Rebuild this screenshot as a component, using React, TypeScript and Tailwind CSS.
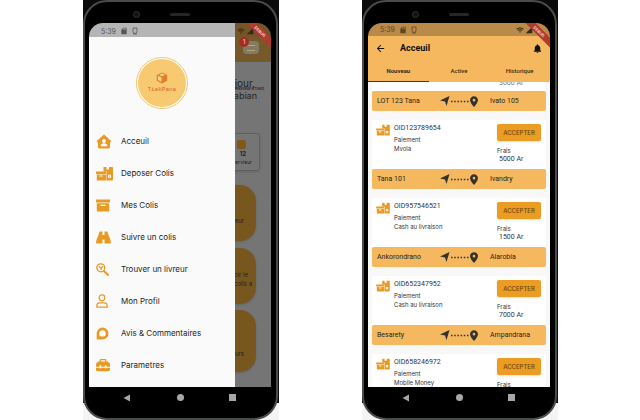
import type { ReactNode } from "react";
import { MdWifi, MdSignalCellular4Bar, MdBatteryFull, MdSdCard, MdNotifications, MdArrowBack } from "react-icons/md";
import { FaToolbox, FaLocationDot } from "react-icons/fa6";

function ParcelsIcon({ className }: { className: string }) {
  return (
    <svg viewBox="0 0 17 15" className={className} fill="#e89a25" aria-hidden="true">
      <path d="M7.500 1h3v2.500h2.500V1H16a1 1 0 0 1 1 1v11.500a1 1 0 0 1-1 1h-5.500V5.500h-3z" />
      <path d="M0 5.500h10v2.500H0zM.8 8.600h9.400v5.900H.8z" />
      <path d="M3.500 9.500h3v1h-3z" fill="#fff" />
      <path d="M12 8.700h3v3h-3z" fill="#fff" />
      <path d="M13 9.700h1v1h-1z" />
    </svg>
  );
}

function HouseIcon() {
  return (
    <svg viewBox="0 0 16 15" className="h-[15px] w-4" fill="#e89a25" aria-hidden="true">
      <path d="M8 .5 15.500 7.300 14.600 8.300H14V13a1.500 1.500 0 0 1-1.500 1.500h-9A1.500 1.500 0 0 1 2 13V8.300h-.6L.5 7.300z" />
      <circle cx="8" cy="7" r="1.900" fill="#fff" />
      <path d="M4.500 12.300c0-4 7-4 7 0z" fill="#fff" />
    </svg>
  );
}

function BoxIcon() {
  return (
    <svg viewBox="0 0 14 13" className="h-[13px] w-3.5" fill="#e89a25" aria-hidden="true">
      <path d="M0 .5h14v3H0zM.8 4.200h12.400V12a.6.6 0 0 1-.6.6H1.400a.6.6 0 0 1-.6-.6z" />
      <path d="M4.500 5.800h5v1.200h-5z" fill="#fff" />
    </svg>
  );
}

function BinocularsIcon() {
  return (
    <svg viewBox="0 0 15 13" className="h-[13px] w-[15px]" fill="#e89a25" aria-hidden="true">
      <path d="M3.500.5h3v11.500a.6.6 0 0 1-.6.6H.8a.7.7 0 0 1-.7-.7C.1 8 2.300 6 3.500.5z" />
      <path d="M11.500.5h-3v11.500a.6.6 0 0 0 .6.6h5.100a.7.7 0 0 0 .7-.7C14.900 8 12.700 6 11.500.5z" />
      <path d="M6 4h3v4.500H6z" />
    </svg>
  );
}

function SearchPersonIcon() {
  return (
    <svg viewBox="0 0 13 13" className="size-[13px]" fill="none" stroke="#e89a25" aria-hidden="true">
      <circle cx="4.800" cy="4.800" r="4" strokeWidth="1.300" />
      <path d="m8 8 4 4" strokeWidth="1.900" strokeLinecap="round" />
      <path d="M3 3.300 5 5.300l2-2.200M5 5.300V7" strokeWidth="1.200" />
    </svg>
  );
}

function ProfileIcon() {
  return (
    <svg viewBox="0 0 12 14" className="h-3.5 w-3" fill="none" stroke="#e89a25" strokeWidth="1.200" aria-hidden="true">
      <rect x="3.200" y=".8" width="5.600" height="6" rx="2.600" />
      <path d="M.8 13.200v-1.500A3 3 0 0 1 3.800 8.800h4.400a3 3 0 0 1 3 2.900v1.500z" />
    </svg>
  );
}

function CommentIcon() {
  return (
    <svg viewBox="0 0 13 13" className="size-[13px]" aria-hidden="true">
      <path d="M6.500.5a6 6 0 0 1 0 12H.7V6.300A5.900 5.900 0 0 1 6.500.5z" fill="#e89a25" />
      <path d="M6.500 3.200a3.200 3.200 0 0 1 0 6.400c-1 0-1.500-.2-2-.6l-1.200.6.3-1.600A3.200 3.200 0 0 1 6.500 3.200z" fill="#fff" />
    </svg>
  );
}

const menu: { label: string; icon: ReactNode }[] = [
  { label: "Acceuil", icon: <HouseIcon /> },
  { label: "Deposer Colis", icon: <ParcelsIcon className="h-[15px] w-[17px]" /> },
  { label: "Mes Colis", icon: <BoxIcon /> },
  { label: "Suivre un colis", icon: <BinocularsIcon /> },
  { label: "Trouver un livreur", icon: <SearchPersonIcon /> },
  { label: "Mon Profil", icon: <ProfileIcon /> },
  { label: "Avis & Commentaires", icon: <CommentIcon /> },
  { label: "Parametres", icon: <FaToolbox className="size-3.5" /> },
];

const orders = [
  { id: "OID123789654", pay: "Mvola", fee: "5000 Ar", from: "Tana 101", to: "Ivandry" },
  { id: "OID957546521", pay: "Cash au livraison", fee: "1500 Ar", from: "Ankorondrano", to: "Alarobia" },
  { id: "OID652347952", pay: "Cash au livraison", fee: "7000 Ar", from: "Besarety", to: "Ampandrana" },
];

function StatusBar({ className }: { className: string }) {
  return (
    <div className={`flex shrink-0 items-center pl-3 pr-2 text-[7px] leading-none ${className}`}>
      <span>5:39</span>
      <MdSdCard className="ml-1 size-2" />
      <svg viewBox="0 0 6 8" className="ml-1 h-2 w-1.5" fill="none" stroke="currentColor" aria-hidden="true">
        <path d="M1 1h4v3.500a2 2 0 0 1-4 0zM1 7h4" strokeWidth=".8" />
      </svg>
      <span className="ml-auto flex gap-px text-[#3b2a12]">
        <MdWifi className="size-2" />
        <MdSignalCellular4Bar className="size-2" />
        <MdBatteryFull className="size-2" />
      </span>
    </div>
  );
}

function Phone({ children }: { children: ReactNode }) {
  return (
    <section className="flex min-w-0 flex-1 flex-col bg-linear-to-b from-[#0b0b0b] from-96% to-[#f4f4f4] to-96%">
      <div className="mr-px flex flex-1 flex-col overflow-hidden rounded-t-[24px] rounded-b-[24px] border-2 border-[#4a4b4b] bg-black pl-1 pr-[5px]">
        <div className="flex h-[21px] shrink-0 items-center pl-11 pt-1">
          <span className="size-[7px] rounded-full border border-[#303030] bg-[#141414]" />
          <span className="ml-[30px] h-[3px] w-5 rounded-full bg-[#262626]" />
        </div>
        <div className="relative flex h-[364px] flex-col overflow-hidden rounded-t-[14px]">
          {children}
          <span className="absolute -right-[13px] top-[5px] z-20 w-12 rotate-45 bg-[#b23a2f] text-center text-[4px] font-bold leading-[7px] text-[#f3d9c8]">
            DEBUG
          </span>
        </div>
        <nav aria-label="Navigation" className="flex h-[21px] items-center justify-between pl-[34px] pr-[35px]">
          <button aria-label="Retour" className="size-2">
            <svg viewBox="0 0 8 8" fill="#a7a7a7"><path d="M7 .5v7L.5 4z" /></svg>
          </button>
          <button aria-label="Accueil" className="size-[7px] rounded-full bg-[#a7a7a7]" />
          <button aria-label="Applications" className="size-[7px] bg-[#a7a7a7]" />
        </nav>
      </div>
    </section>
  );
}

function HomeBackdrop() {
  return (
    <div className="flex flex-1 flex-col items-end overflow-hidden bg-[#757575] text-[#222]">
      <header className="flex h-[25px] w-full shrink-0 items-start justify-end bg-[#76592b] pr-3 pt-1">
        <div className="relative h-[13px] w-4 rounded-sm bg-[#827b62] px-1 pt-1">
          <div className="h-px bg-[#b3a67b]" />
          <div className="mt-1 h-px bg-[#b3a67b]" />
          <span className="absolute -left-1 -top-1 size-[10px] rounded-full bg-[#a62c22] text-center text-[6px] font-bold leading-[10px] text-[#d8a79c]">1</span>
        </div>
      </header>
      <div className="mt-4 pr-4 text-[10px] leading-[10px]">Bonjour,</div>
      <div className="pr-[7px] text-[3px] font-bold leading-[3px] text-[#432020]">BIENVENUE A TIAKO</div>
      <div className="pr-3.5 text-[9px] leading-[10px]">Fabian</div>
      <div className="mr-[11px] mt-8 flex h-[38px] w-14 shrink-0 flex-col items-end rounded-[3px] border border-[#606060] pr-[7px] pt-1.5 shadow-sm">
        <span className="mr-1.5 size-[9px] rounded-xs bg-[#815817]" />
        <span className="mr-1.5 text-[6px] font-bold leading-[10px]">12</span>
        <span className="text-[5px] leading-[6px]">servieur</span>
      </div>
      <div className="mr-[15px] mt-3.5 flex h-14 w-16 shrink-0 flex-col justify-end rounded-2xl bg-[#78571f] pb-4 pr-3 text-right text-[6px] leading-[9px] shadow-sm">livreur</div>
      <div className="mr-[15px] mt-[7px] flex h-14 w-16 shrink-0 flex-col justify-end rounded-2xl bg-[#78571f] pb-4 pr-1 text-right text-[6px] leading-[9px] shadow-sm">
        <span className="pr-1">Voir le</span>
        <span>colis a</span>
      </div>
      <div className="mr-[15px] mt-1.5 flex h-[62px] w-16 shrink-0 flex-col justify-end rounded-2xl bg-[#78571f] pb-3.5 pr-3 text-right text-[6px] leading-[9px] shadow-sm">cours</div>
    </div>
  );
}

function DrawerScreen() {
  return (
    <Phone>
      <div className="flex flex-1 flex-col">
        <StatusBar className="h-3.5 bg-linear-to-r from-[#b5b5b5] from-80% to-[#745529] to-80% pt-0.5 text-[#555]" />
        <HomeBackdrop />
      </div>
      <aside className="absolute bottom-0 left-0 top-3.5 z-10 w-4/5 bg-[#fafafa]">
        <div className="flex h-[88px] justify-center pt-5">
          <div className="size-[52px] rounded-full border border-[#f4c66b] bg-white p-px">
            <div className="flex size-full flex-col items-center justify-center rounded-full bg-[#f7ca71] text-[#d76624]">
              <svg viewBox="0 0 12 12" className="size-3" aria-hidden="true">
                <path d="M.8 3 6 .6 11.200 3v5.800L6 11.400.8 8.800z" fill="#e0812b" />
                <path d="m2 4 3.500 1.500v4.200L2 8zM3 2.900 6 1.600l3 1.300-3 1.300z" fill="#f9d38a" />
              </svg>
              <span className="mt-0.5 font-['Liberation_Mono',monospace] text-[6px] leading-2">TiakPana</span>
            </div>
          </div>
        </div>
        <nav aria-label="Menu">
          {menu.map((item) => (
            <a key={item.label} href="#" className="flex h-8 items-center pl-[7px] text-[8px] text-[#252525]">
              <span className="flex w-[25px] text-[#e89a25]">{item.icon}</span>
              {item.label}
            </a>
          ))}
        </nav>
      </aside>
    </Phone>
  );
}

function Route({ from, to }: { from: string; to: string }) {
  return (
    <div className="flex h-5 items-center rounded-xs bg-[#f5b85f] pl-[5px] font-['Roboto',sans-serif] text-[7px] text-[#2c2418]">
      <span className="w-[63px]">{from}</span>
      <svg viewBox="0 0 30 12" className="h-3 w-[30px]" fill="#33322f" aria-hidden="true">
        <path d="M0 5.500 9.500 1 6.500 11 5 6.500z" />
        <path d="M11 6.500h18" stroke="#33322f" strokeWidth="1.500" strokeDasharray="1.500 1.700" />
      </svg>
      <FaLocationDot className="h-[11px] w-2 text-[#33322f]" />
      <span className="ml-3">{to}</span>
    </div>
  );
}

interface OrderProps {
  id: string;
  pay: string;
  fee?: string;
}

function Order({ id, pay, fee }: OrderProps) {
  return (
    <div className="mt-[9px] flex h-[49px] bg-white pl-1 pr-[5px] pt-1">
      <ParcelsIcon className="h-3 w-3.5" />
      <div className="ml-1 text-[6px]">
        <h2 className="font-['Roboto',sans-serif] text-[7px] leading-2">{id}</h2>
        <p className="mt-1 leading-2">Paiement</p>
        <p className="leading-[9px]">{pay}</p>
      </div>
      <div className="ml-auto w-11">
        <button className="block h-[17px] w-full rounded-xs bg-[#eb9c22] text-[6px] font-medium text-[#6f4510] shadow-sm">ACCEPTER</button>
        <p className="mt-1.5 text-[6px] leading-2">Frais</p>
        {fee && <p className="pl-0.5 font-['Roboto',sans-serif] text-[7px] leading-[9px]">{fee}</p>}
      </div>
    </div>
  );
}

function OrdersScreen() {
  return (
    <Phone>
      <StatusBar className="h-[13px] bg-[#b98a48] text-[#5e4626]" />
      <header className="shrink-0 bg-[#f5b85f] font-['Roboto',sans-serif]">
        <div className="flex h-[25px] items-center px-[7px] text-[#111]">
          <button aria-label="Retour"><MdArrowBack className="block size-[11px]" /></button>
          <h1 className="ml-3.5 text-[9px] font-bold">Acceuil</h1>
          <button aria-label="Notifications" className="ml-auto"><MdNotifications className="block size-[11px]" /></button>
        </div>
        <div role="tablist" className="grid h-[21px] grid-cols-3 text-[6px] text-[#3a2c18]">
          <button role="tab" aria-selected="true" className="border-b border-[#3b362e] pb-0.5 font-bold">Nouveau</button>
          <button role="tab" aria-selected="false" className="border-b border-transparent pb-0.5 font-medium">Active</button>
          <button role="tab" aria-selected="false" className="border-b border-transparent pb-0.5 font-medium">Historique</button>
        </div>
      </header>
      <main className="flex-1 overflow-hidden bg-[#f8f8f8] px-1 text-[#333]">
        <div className="h-[9px] bg-white pl-[127px] font-['Roboto',sans-serif] text-[7px] leading-[2px] text-[#777]">3000 Ar</div>
        <Route from="LOT 123 Tana" to="Ivato 105" />
        {orders.map(({ from, to, ...order }) => (
          <article key={order.id}>
            <Order {...order} />
            <Route from={from} to={to} />
          </article>
        ))}
        <Order id="OID658246972" pay="Mobile Money" />
      </main>
    </Phone>
  );
}

export default function App() {
  return (
    <div className="flex h-screen min-h-[420px] gap-[83px] overflow-hidden bg-white pl-[83px] pr-[82px] font-['Inter',sans-serif]">
      <DrawerScreen />
      <OrdersScreen />
    </div>
  );
}
